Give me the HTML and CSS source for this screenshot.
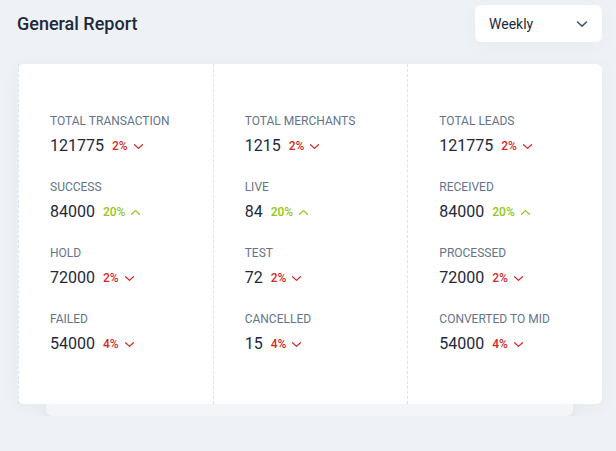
FILE: index.html
```html
<!DOCTYPE html>
<html>
<head>
<meta charset="utf-8">
<link rel="stylesheet" href="styles.css">
</head>
<body>
<div class="page">
  <div class="header">
    <h2 class="title">General Report</h2>
    <div class="select">
      <span>Weekly</span>
      <svg class="select-chev" width="12" height="8" viewBox="0 0 12 8"><path d="M1.5 2 L6 6.2 L10.5 2" fill="none" stroke="#4b5563" stroke-width="1.6" stroke-linecap="round" stroke-linejoin="round"/></svg>
    </div>
  </div>
  <div class="report">
    <div class="report-box">
      <div class="col">
        <div class="stat"><div class="label">TOTAL TRANSACTION</div><div class="value">121775 <span class="pct down">2%<svg class="chev" viewBox="0 0 12 8"><path d="M1.5 2 L6 6.2 L10.5 2"/></svg></span></div></div>
        <div class="stat"><div class="label">SUCCESS</div><div class="value">84000 <span class="pct up">20%<svg class="chev" viewBox="0 0 12 8"><path d="M1.5 6 L6 1.8 L10.5 6"/></svg></span></div></div>
        <div class="stat"><div class="label">HOLD</div><div class="value">72000 <span class="pct down">2%<svg class="chev" viewBox="0 0 12 8"><path d="M1.5 2 L6 6.2 L10.5 2"/></svg></span></div></div>
        <div class="stat"><div class="label">FAILED</div><div class="value">54000 <span class="pct down">4%<svg class="chev" viewBox="0 0 12 8"><path d="M1.5 2 L6 6.2 L10.5 2"/></svg></span></div></div>
      </div>
      <div class="col">
        <div class="stat"><div class="label">TOTAL MERCHANTS</div><div class="value">1215 <span class="pct down">2%<svg class="chev" viewBox="0 0 12 8"><path d="M1.5 2 L6 6.2 L10.5 2"/></svg></span></div></div>
        <div class="stat"><div class="label">LIVE</div><div class="value">84 <span class="pct up">20%<svg class="chev" viewBox="0 0 12 8"><path d="M1.5 6 L6 1.8 L10.5 6"/></svg></span></div></div>
        <div class="stat"><div class="label">TEST</div><div class="value">72 <span class="pct down">2%<svg class="chev" viewBox="0 0 12 8"><path d="M1.5 2 L6 6.2 L10.5 2"/></svg></span></div></div>
        <div class="stat"><div class="label">CANCELLED</div><div class="value">15 <span class="pct down">4%<svg class="chev" viewBox="0 0 12 8"><path d="M1.5 2 L6 6.2 L10.5 2"/></svg></span></div></div>
      </div>
      <div class="col">
        <div class="stat"><div class="label">TOTAL LEADS</div><div class="value">121775 <span class="pct down">2%<svg class="chev" viewBox="0 0 12 8"><path d="M1.5 2 L6 6.2 L10.5 2"/></svg></span></div></div>
        <div class="stat"><div class="label">RECEIVED</div><div class="value">84000 <span class="pct up">20%<svg class="chev" viewBox="0 0 12 8"><path d="M1.5 6 L6 1.8 L10.5 6"/></svg></span></div></div>
        <div class="stat"><div class="label">PROCESSED</div><div class="value">72000 <span class="pct down">2%<svg class="chev" viewBox="0 0 12 8"><path d="M1.5 2 L6 6.2 L10.5 2"/></svg></span></div></div>
        <div class="stat"><div class="label">CONVERTED TO MID</div><div class="value">54000 <span class="pct down">4%<svg class="chev" viewBox="0 0 12 8"><path d="M1.5 2 L6 6.2 L10.5 2"/></svg></span></div></div>
      </div>
    </div>
    <div class="report-back"></div>
  </div>
</div>
</body>
</html>
```

FILE: styles.css
```css
* { box-sizing: border-box; }
html, body {
  margin: 0;
  background: #eef1f6;
  font-family: Roboto, "Noto Sans", sans-serif;
  color: #1e293b;
}
.page {
  padding: 5px 14px 0 18px;
}
.header {
  display: flex;
  align-items: center;
  justify-content: space-between;
  height: 37px;
  margin-bottom: 22px;
}
.title {
  margin: 0;
  font-size: 18px;
  font-weight: 500;
  color: #1e293b;
  margin-left: -1px;
}
.select {
  width: 127px;
  height: 37px;
  background: #fff;
  border-radius: 6px;
  box-shadow: 0 3px 20px rgba(0,0,0,0.04);
  display: flex;
  align-items: center;
  justify-content: space-between;
  padding: 0 14px 0 14px;
  font-size: 14px;
  color: #1e293b;
}
.select-chev { display: block; }
.report {
  display: flex;
  flex-direction: column;
}
.report-box {
  display: grid;
  grid-template-columns: 1fr 1fr 1fr;
  background: #fff;
  border-radius: 6px;
  box-shadow: 0 3px 20px rgba(0,0,0,0.045);
  height: 340px;
}
.report-back {
  margin: 0 29px 0 28px;
  height: 12px;
  background: #f4f5f8;
  border-radius: 0 0 6px 6px;
  box-shadow: 0 5px 12px rgba(30,41,59,0.09);
}
.col {
  border-left: 1px dashed #dde3ea;
  padding: 49px 0 0 31px;
  display: flex;
  flex-direction: column;
  gap: 21px;
}
.label {
  font-size: 12px;
  line-height: 16px;
  color: #64748b;
  margin-bottom: 5px;
}
.value {
  font-size: 16px;
  line-height: 24px;
  color: #1e293b;
  display: flex;
  align-items: center;
}
.pct {
  display: inline-flex;
  align-items: center;
  margin-left: 8px;
  font-size: 12px;
  font-weight: 500;
}
.pct.down { color: #d32929; }
.pct.up { color: #91c714; }
.chev {
  width: 11px;
  height: 7px;
  margin-left: 5px;
  fill: none;
  stroke: currentColor;
  stroke-width: 1.4;
  stroke-linecap: round;
  stroke-linejoin: round;
}
```
